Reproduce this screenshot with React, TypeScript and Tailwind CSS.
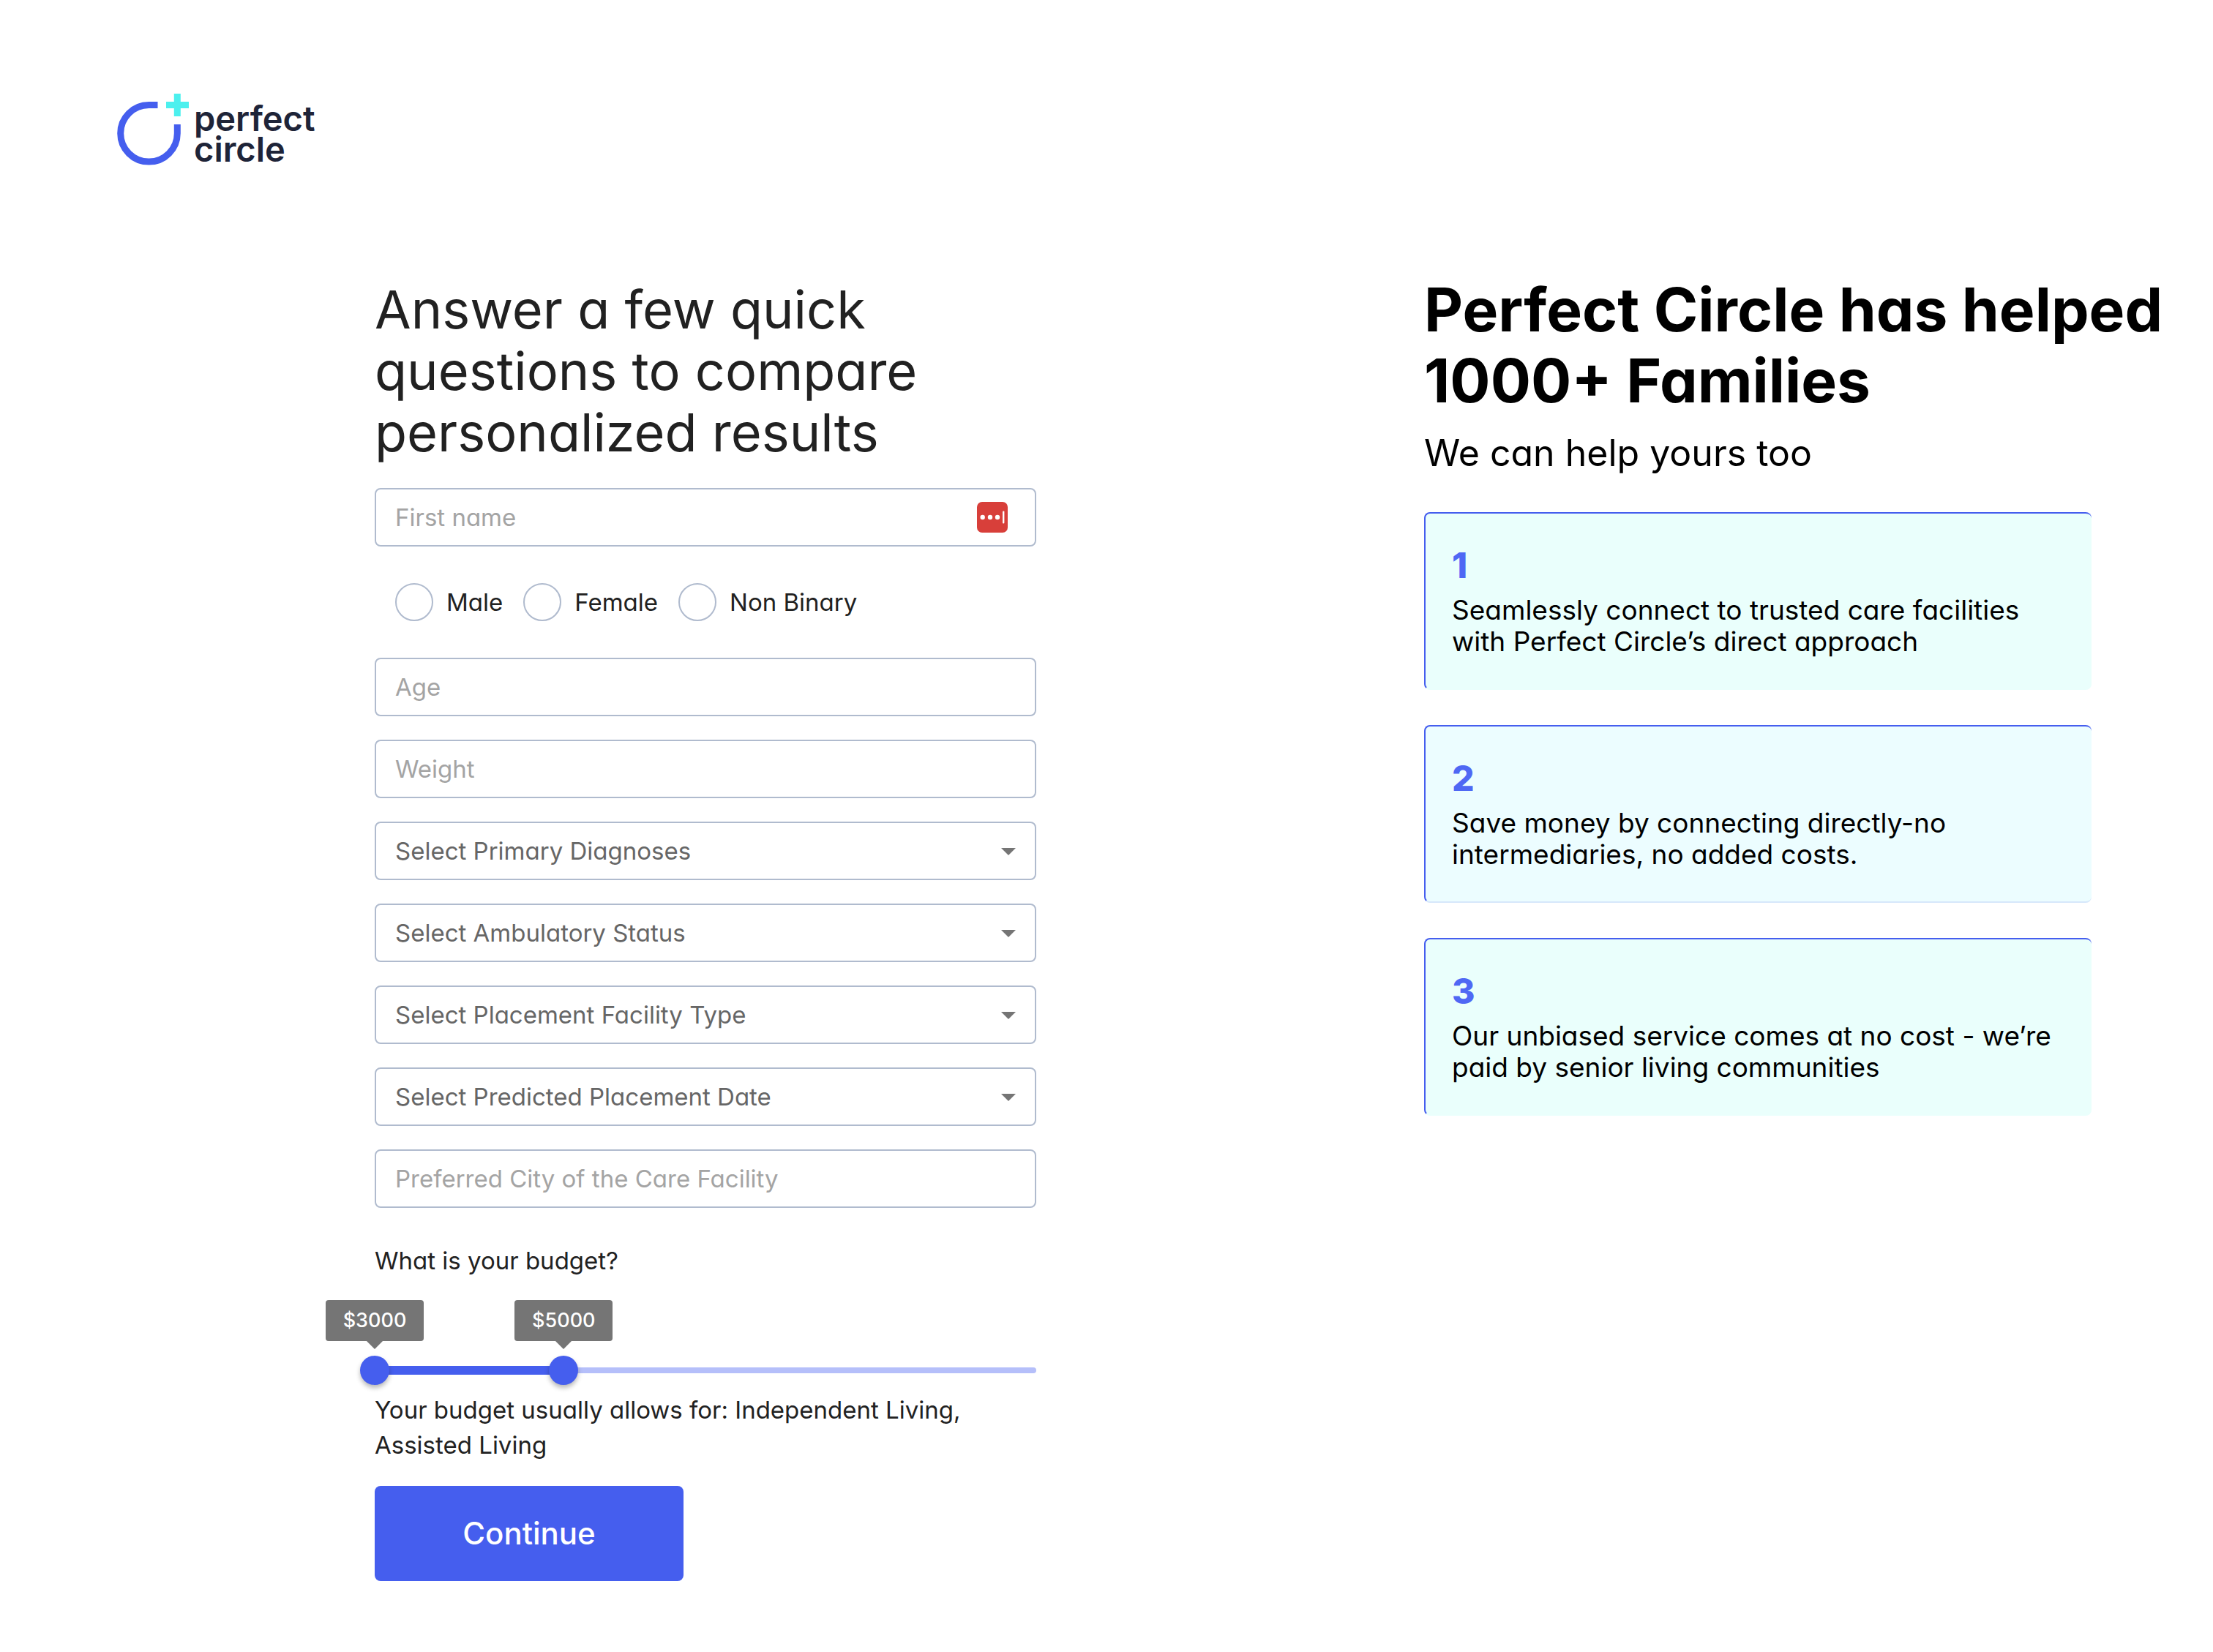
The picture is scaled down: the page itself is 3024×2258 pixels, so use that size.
import { useState } from "react";

const BUDGET_MIN = 3000;
const BUDGET_MAX = 10000;

const fieldBox =
  "block h-20 w-full rounded-lg border-2 border-[#b0bbce] bg-white px-[26px] text-[33px] leading-10 outline-none focus:border-[#455eee]";

const rangeInput =
  "pointer-events-none absolute -left-5 top-0 h-10 w-[calc(100%+40px)] appearance-none bg-transparent outline-none [&::-webkit-slider-runnable-track]:bg-transparent [&::-webkit-slider-thumb]:pointer-events-auto [&::-webkit-slider-thumb]:size-10 [&::-webkit-slider-thumb]:cursor-pointer [&::-webkit-slider-thumb]:appearance-none [&::-webkit-slider-thumb]:rounded-full [&::-webkit-slider-thumb]:bg-[#455eee] [&::-webkit-slider-thumb]:shadow-[0_4px_6px_rgba(0,0,0,0.28)]";

const steps = [
  {
    number: "1",
    lines: ["Seamlessly connect to trusted care facilities", "with Perfect Circle’s direct approach"],
    tone: "bg-[#eafffc] border-b-[#eafffc]",
  },
  {
    number: "2",
    lines: ["Save money by connecting directly-no", "intermediaries, no added costs."],
    tone: "bg-[#ecfdff] border-b-[#d6e8fb]",
  },
  {
    number: "3",
    lines: ["Our unbiased service comes at no cost - we’re", "paid by senior living communities"],
    tone: "bg-[#eafffc] border-b-[#eafffc]",
  },
];

function Logo() {
  return (
    <a href="#" className="flex w-fit items-start gap-1.5" aria-label="perfect circle">
      <svg width="99" height="98" viewBox="0 0 99 98" fill="none" aria-hidden="true">
        <path d="M55.5 15.5H43.5A38.8 38.8 0 1 0 82.3 54.3V42" stroke="#455eee" strokeWidth="9" />
        <path d="M82.3 0V31M67 15.5H98" stroke="#4cf0ee" strokeWidth="9" />
      </svg>
      <span className="mt-[13px] text-[47px] leading-[42px] font-semibold text-[#1e2438]">
        perfect
        <br />
        circle
      </span>
    </a>
  );
}

function TextField({ id, label }: { id: string; label: string }) {
  return (
    <input
      id={id}
      type="text"
      aria-label={label}
      placeholder={label}
      className={`${fieldBox} text-[#212121] placeholder:text-[#a4a4a4]`}
    />
  );
}

function SelectField({ id, label }: { id: string; label: string }) {
  return (
    <div className="relative">
      <select id={id} aria-label={label} defaultValue="" className={`${fieldBox} appearance-none text-[#666666]`}>
        <option value="">{label}</option>
      </select>
      <svg
        className="pointer-events-none absolute right-7 top-9 h-2.5 w-5"
        viewBox="0 0 20 10"
        fill="#757575"
        aria-hidden="true"
      >
        <path d="M0 0H20L10 10Z" />
      </svg>
    </div>
  );
}

function PasswordManagerButton() {
  return (
    <button type="button" aria-label="Fill from password manager" className="absolute right-[39px] top-[19px]">
      <svg className="block" width="42" height="42" viewBox="0 0 42 42" aria-hidden="true">
        <rect width="42" height="42" rx="7" fill="#d83f3a" />
        <g fill="#fff">
          <circle cx="7.7" cy="21" r="3.2" />
          <circle cx="18" cy="21" r="3.2" />
          <circle cx="28" cy="21" r="3.2" />
          <rect x="35" y="12.5" width="2.4" height="17" rx="1" />
        </g>
      </svg>
    </button>
  );
}

function ValueBubble({ value, percent }: { value: number; percent: number }) {
  return (
    <output
      style={{ left: `${percent}%` }}
      className="absolute bottom-[60px] flex h-14 w-[134px] -translate-x-1/2 items-center justify-center rounded-sm bg-[#757575] text-[27px] leading-8 font-medium text-white"
    >
      ${value}
      <svg
        className="absolute left-1/2 top-full h-[11px] w-[22px] -translate-x-1/2"
        viewBox="0 0 22 11"
        fill="#757575"
        aria-hidden="true"
      >
        <path d="M0 0H22L11 11Z" />
      </svg>
    </output>
  );
}

function BudgetSlider() {
  const [low, setLow] = useState(3000);
  const [high, setHigh] = useState(5000);
  const percent = (v: number) => ((v - BUDGET_MIN) / (BUDGET_MAX - BUDGET_MIN)) * 100;

  return (
    <div className="relative mt-[106px] h-10">
      <div className="absolute inset-x-0 top-4 h-2 rounded-full bg-[#b5bffa]" />
      <div
        className="absolute top-3.5 h-3 bg-[#455eee]"
        style={{ left: `${percent(low)}%`, width: `${percent(high) - percent(low)}%` }}
      />
      <input
        type="range"
        aria-label="Minimum budget"
        min={BUDGET_MIN}
        max={BUDGET_MAX}
        step={100}
        value={low}
        onChange={(e) => setLow(Math.min(Number(e.target.value), high))}
        className={rangeInput}
      />
      <input
        type="range"
        aria-label="Maximum budget"
        min={BUDGET_MIN}
        max={BUDGET_MAX}
        step={100}
        value={high}
        onChange={(e) => setHigh(Math.max(Number(e.target.value), low))}
        className={rangeInput}
      />
      <ValueBubble value={low} percent={percent(low)} />
      <ValueBubble value={high} percent={percent(high)} />
    </div>
  );
}

export default function App() {
  return (
    <div className="min-h-screen bg-white font-['Inter',sans-serif] text-[#212121] [font-feature-settings:'cv11']">
      <header className="px-40 pt-32">
        <Logo />
      </header>

      <main className="mt-[149px] grid grid-cols-[minmax(0,512fr)_minmax(0,904fr)_minmax(0,530fr)_minmax(0,912fr)_minmax(0,166fr)] items-start pb-24">
        <form className="col-start-2 pt-1.5" onSubmit={(e) => e.preventDefault()}>
          <h1 className="text-[72px] leading-[84px]">
            Answer a few quick
            <br />
            questions to compare
            <br />
            personalized results
          </h1>

          <div className="relative mt-[34px]">
            <TextField id="first-name" label="First name" />
            <PasswordManagerButton />
          </div>

          <fieldset
            aria-label="Gender"
            className="flex h-[152px] items-center gap-7 pl-7 text-[33px] leading-10"
          >
            {["Male", "Female", "Non Binary"].map((option) => (
              <label key={option} className="flex items-center gap-[18px]">
                <input
                  type="radio"
                  name="gender"
                  value={option}
                  className="size-[52px] appearance-none rounded-full border-2 border-[#b0bbce] bg-white checked:border-[14px] checked:border-[#455eee]"
                />
                {option}
              </label>
            ))}
          </fieldset>

          <div className="flex flex-col gap-8">
            <TextField id="age" label="Age" />
            <TextField id="weight" label="Weight" />
            <SelectField id="diagnoses" label="Select Primary Diagnoses" />
            <SelectField id="ambulatory" label="Select Ambulatory Status" />
            <SelectField id="facility" label="Select Placement Facility Type" />
            <SelectField id="placement-date" label="Select Predicted Placement Date" />
            <TextField id="city" label="Preferred City of the Care Facility" />
          </div>

          <p className="mt-12 text-[33px] leading-12">What is your budget?</p>
          <BudgetSlider />
          <p className="mt-[10px] text-[33px] leading-12">
            Your budget usually allows for: Independent Living,
            <br />
            Assisted Living
          </p>

          <button
            type="submit"
            className="mt-8 h-[130px] w-[422px] rounded-lg bg-[#455eee] text-[42px] leading-12 font-medium text-white"
          >
            Continue
          </button>
        </form>

        <section className="col-start-4 text-black">
          <h2 className="text-[82px] leading-[97px] font-bold whitespace-nowrap">
            Perfect Circle has helped
            <br />
            1000+ Families
          </h2>
          <p className="mt-5 text-[50px] leading-[60px]">We can help yours too</p>
          <ol className="mt-[51px] flex flex-col gap-12">
            {steps.map((step) => (
              <li
                key={step.number}
                className={`rounded-lg border-t-2 border-b-2 border-l-2 border-t-[#455eee] border-l-[#455eee] px-9 pt-[42px] pb-[43px] ${step.tone}`}
              >
                <p className="text-[48px] leading-[58px] font-extrabold text-[#4f68f4]">{step.number}</p>
                <p className="mt-[10px] text-[37px] leading-[43px] whitespace-nowrap">
                  {step.lines[0]}
                  <br />
                  {step.lines[1]}
                </p>
              </li>
            ))}
          </ol>
        </section>
      </main>
    </div>
  );
}
